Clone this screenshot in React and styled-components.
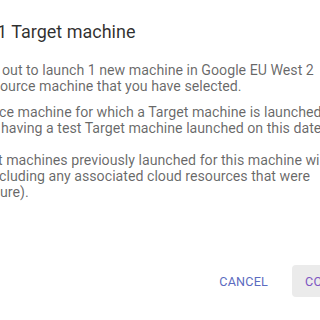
import React from "react";
import styled, { createGlobalStyle } from "styled-components";

const Global = createGlobalStyle`
  html, body { margin: 0; padding: 0; background: #ffffff; overflow: hidden; }
  body { font-family: Roboto, "Noto Sans", sans-serif; }
`;

const Dialog = styled.div`
  width: 320px;
  height: 320px;
  display: flex;
  flex-direction: column;
  overflow: hidden;
  background: #ffffff;
`;

const Title = styled.h2`
  margin: 20px 0 0 -3px;
  font-size: 18px;
  font-weight: 400;
  line-height: 24px;
  color: rgba(0, 0, 0, 0.82);
  white-space: nowrap;
`;

const Content = styled.div`
  display: flex;
  flex-direction: column;
  margin-top: 18px;
`;

const Para = styled.p`
  margin: 0 0 ${(p) => p.$gap}px 0;
  display: flex;
  flex-direction: column;
`;

const Line = styled.span`
  display: block;
  font-size: 14.2px;
  line-height: 16px;
  color: rgba(0, 0, 0, 0.6);
  white-space: nowrap;
  margin-left: ${(p) => p.$shift}px;
`;

const Actions = styled.div`
  margin-top: auto;
  margin-bottom: 23px;
  display: flex;
  align-items: center;
  justify-content: flex-end;
  gap: 16px;
  margin-right: -60px;
`;

const TextButton = styled.button`
  border: none;
  background: transparent;
  font-family: Roboto, sans-serif;
  font-size: 12.6px;
  font-weight: 400;
  letter-spacing: 0.2px;
  color: #5c6bc0;
  padding: 0 8px;
  height: 32px;
`;

const FilledButton = styled.button`
  border: none;
  border-radius: 4px;
  background: #ebebeb;
  font-family: Roboto, sans-serif;
  font-size: 12.6px;
  letter-spacing: 0.2px;
  color: #7e57c2;
  padding: 0 13px;
  height: 32px;
  width: 88px;
  text-align: left;
`;

export default function App() {
  return (
    <>
      <Global />
      <Dialog>
        <Title>1 Target machine</Title>
        <Content>
          <Para $gap={10}>
            <Line $shift={2}>out to launch 1 new machine in Google EU West 2</Line>
            <Line $shift={0}>ource machine that you have selected.</Line>
          </Para>
          <Para $gap={16}>
            <Line $shift={-1}>ce machine for which a Target machine is launched</Line>
            <Line $shift={1}> having a test Target machine launched on this date</Line>
          </Para>
          <Para $gap={0}>
            <Line $shift={-2}>t machines previously launched for this machine will</Line>
            <Line $shift={-1}>cluding any associated cloud resources that were</Line>
            <Line $shift={0}>ure).</Line>
          </Para>
        </Content>
        <Actions>
          <TextButton>CANCEL</TextButton>
          <FilledButton>CONTINUE</FilledButton>
        </Actions>
      </Dialog>
    </>
  );
}
